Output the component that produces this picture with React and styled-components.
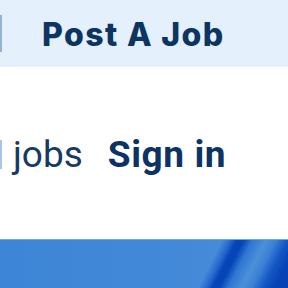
import React from 'react'
import styled, { createGlobalStyle } from 'styled-components'

const GlobalStyle = createGlobalStyle`
  html, body {
    margin: 0;
    padding: 0;
    background: #ffffff;
    overflow: hidden;
  }
`

const Page = styled.div`
  width: 288px;
  height: 288px;
  display: flex;
  flex-direction: column;
  overflow: hidden;
`

const TopBar = styled.div`
  height: 67px;
  background: #e4f0fb;
  display: flex;
  align-items: center;
  gap: 40px;
`

const Edge = styled.div`
  width: 2px;
  height: ${({ h }) => h}px;
  background: ${({ color }) => color};
  flex: none;
`

const PostJob = styled.a`
  font-family: Inter, "Noto Sans", sans-serif;
  font-weight: 800;
  font-size: 32px;
  letter-spacing: 1.4px;
  color: #0d3562;
  text-decoration: none;
  line-height: 1;
  margin-top: 2px;
  white-space: nowrap;
`

const Nav = styled.nav`
  height: 172px;
  display: flex;
  align-items: center;
  padding-top: 2px;
  box-sizing: border-box;
`

const NavLink = styled.a`
  font-family: Roboto, "Liberation Sans", sans-serif;
  font-size: 37px;
  font-weight: ${({ bold }) => (bold ? 700 : 400)};
  letter-spacing: ${({ bold }) => (bold ? '0.6px' : '0')};
  color: ${({ bold }) => (bold ? '#0b3363' : '#163a64')};
  text-decoration: none;
  line-height: 1;
  margin-left: ${({ gap }) => gap}px;
  white-space: nowrap;
`

const Hero = styled.div`
  flex: 1;
  border-top: 1px solid #6fa6e2;
  background:
    linear-gradient(
      117deg,
      rgba(74, 144, 218, 0) 0px,
      rgba(74, 144, 218, 0) 198px,
      #2466cc 206px,
      #0645b8 211px,
      #0645b8 217px,
      #2f77d3 225px,
      #4a90da 237px,
      #3b80d5 246px,
      #1456c4 256px,
      #0743b4 266px,
      #0641b2 290px
    ),
    linear-gradient(90deg, #3d85d6 0%, #4288d8 55%, #4a8fda 100%);
`

export default function App() {
  return (
    <>
      <GlobalStyle />
      <Page>
        <TopBar>
          <Edge h={37} color="#94b3d1" />
          <PostJob href="#">Post A Job</PostJob>
        </TopBar>
        <Nav>
          <Edge h={29} color="#a9c5e2" />
          <NavLink href="#" gap={11}>jobs</NavLink>
          <NavLink href="#" bold gap={25}>Sign in</NavLink>
        </Nav>
        <Hero />
      </Page>
    </>
  )
}
